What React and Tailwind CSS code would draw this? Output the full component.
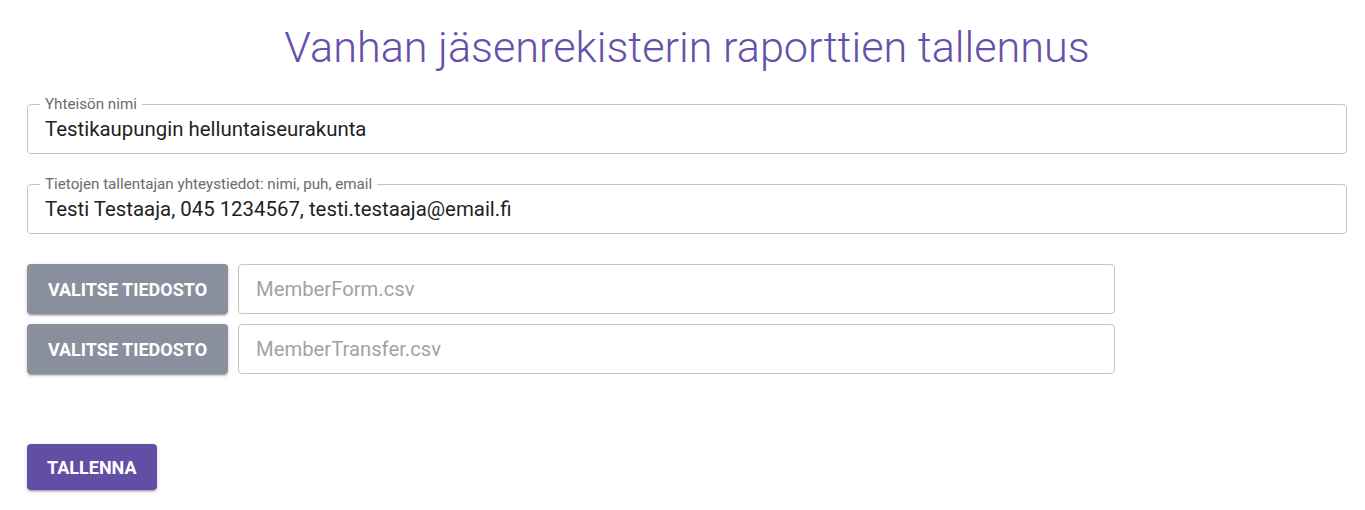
import React from "react";

const font = { fontFamily: "Roboto, 'Noto Sans', sans-serif" };

const raised =
  "shadow-[0_3px_1px_-2px_rgba(0,0,0,0.2),0_2px_2px_0_rgba(0,0,0,0.14),0_1px_5px_0_rgba(0,0,0,0.12)]";

const OutlinedField = ({ label, value }) => (
  <div className="relative h-[50px] rounded-[4px] border border-[#c4c4c4] bg-white">
    <span className="absolute left-[12px] top-[-10px] bg-white px-[5px] text-[15.2px] leading-[18px] text-[#6b6b6b]">
      {label}
    </span>
    <div className="flex h-full items-center px-[17px] text-[20.4px] text-[#1f1f1f]">{value}</div>
  </div>
);

const FileRow = ({ placeholder }) => (
  <div className="flex gap-[10px]">
    <button
      type="button"
      className={`h-[50px] w-[201px] rounded-[4px] bg-[#8a8f9e] text-[18px] font-bold uppercase text-white ${raised}`}
    >
      Valitse tiedosto
    </button>
    <div className="flex h-[50px] w-[877px] items-center rounded-[4px] border border-[#c4c4c4] px-[17px] text-[20.25px] text-[#a3a3a3]">
      {placeholder}
    </div>
  </div>
);

export default function App() {
  return (
    <div className="min-h-[510px] bg-white px-[27px] pt-6 pr-[18px]" style={font}>
      <h1 className="mb-8 text-center text-[43.2px] font-light leading-[48px] text-[#6650ab]">
        Vanhan jäsenrekisterin raporttien tallennus
      </h1>
      <div className="flex flex-col gap-[30px]">
        <OutlinedField label="Yhteisön nimi" value="Testikaupungin helluntaiseurakunta" />
        <OutlinedField
          label="Tietojen tallentajan yhteystiedot: nimi, puh, email"
          value="Testi Testaaja, 045 1234567, testi.testaaja@email.fi"
        />
        <div className="flex flex-col gap-[10px]">
          <FileRow placeholder="MemberForm.csv" />
          <FileRow placeholder="MemberTransfer.csv" />
        </div>
      </div>
      <button
        type="button"
        className={`mt-[70px] h-[46px] rounded-[4px] bg-[#634ea5] px-[20px] text-[18px] font-bold uppercase text-white ${raised}`}
      >
        Tallenna
      </button>
    </div>
  );
}
